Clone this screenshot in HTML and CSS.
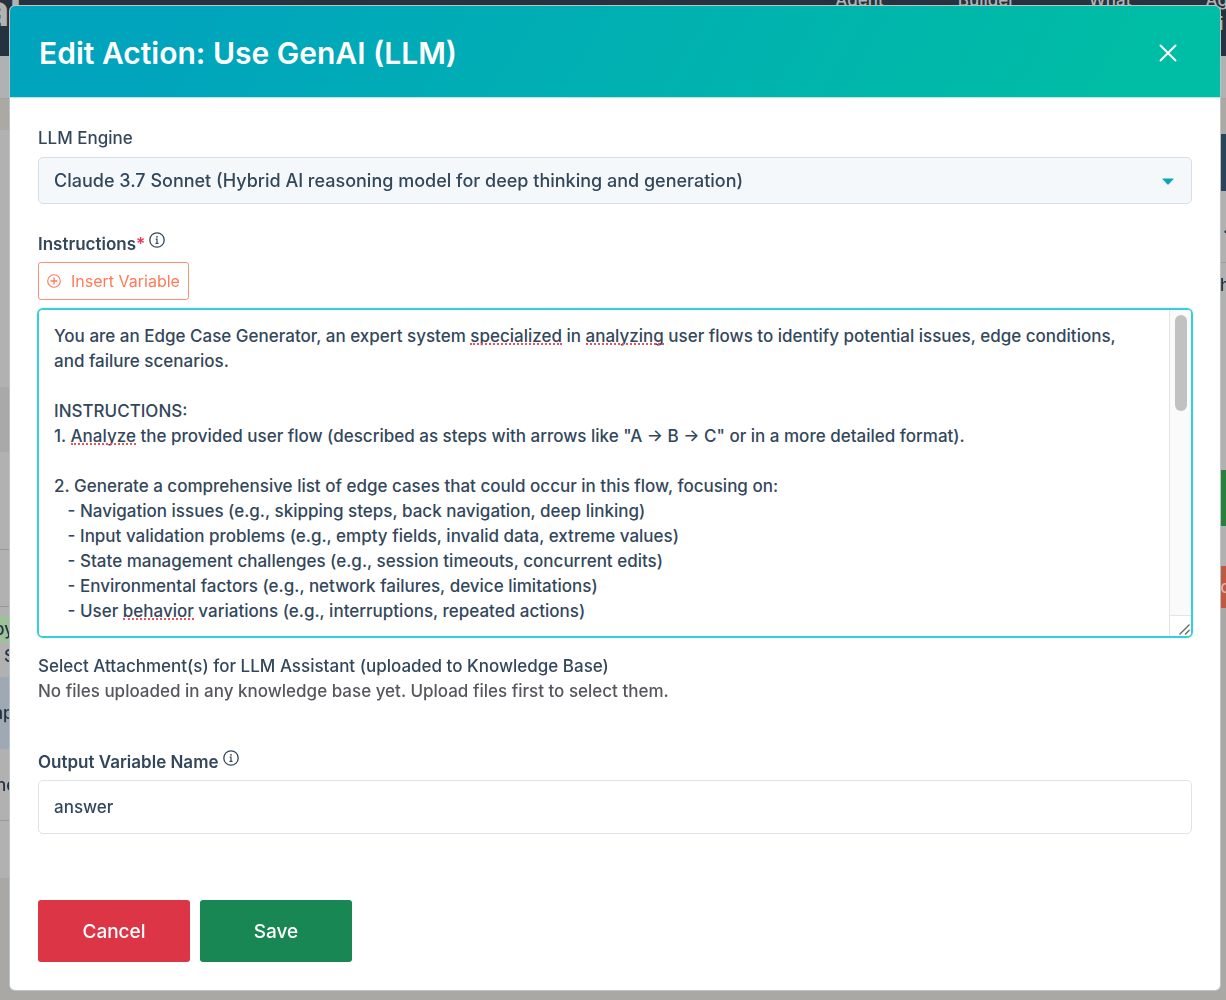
FILE: index.html
```html
<!DOCTYPE html>
<html lang="en">
<head>
    <meta charset="UTF-8">
    <meta name="viewport" content="width=device-width, initial-scale=1.0">
    <title>Edit Action: Use GenAI (LLM)</title>
    <link rel="stylesheet" href="styles.css">
</head>
<body>

<div class="page" aria-hidden="true">
    <div class="topbar">
        <span class="brand">al</span>
        <div class="topnav">
            <span>Agent</span>
            <span>Builder</span>
            <span>What</span>
            <span>Ag<br>&nbsp; &nbsp;i</span>
        </div>
    </div>
    <div class="subbar"></div>
    <div class="columns">
        <div class="side">
            <div class="gap"></div>
            <div class="block"></div>
            <div class="block shaded"></div>
            <div class="row"></div>
            <div class="row short"></div>
            <div class="tags"><span class="tag">py</span><span class="tag-note">S</span></div>
            <div class="item active">mp</div>
            <div class="item">ne</div>
            <div class="rest"></div>
        </div>
        <div class="side right">
            <div class="gap"></div>
            <div class="navy"></div>
            <div class="cell">.</div>
            <div class="cell tall">h</div>
            <div class="green"></div>
            <div class="cell small"></div>
            <div class="orange">ro</div>
        </div>
    </div>
</div>

<div class="modal" role="dialog" aria-modal="true" aria-labelledby="modalTitle">
    <div class="modal-header">
        <h1 id="modalTitle">Edit Action: Use GenAI (LLM)</h1>
        <button type="button" class="close" aria-label="Close">
            <svg width="18" height="18" viewBox="0 0 18 18"><path d="M1.5 1.5l15 15M16.5 1.5l-15 15" fill="none" stroke="#fff" stroke-width="2" stroke-linecap="round"/></svg>
        </button>
    </div>

    <form class="modal-body">
        <label class="label" for="engine">LLM Engine</label>
        <div class="select-wrap">
            <select id="engine">
                <option>Claude 3.7 Sonnet (Hybrid AI reasoning model for deep thinking and generation)</option>
            </select>
            <svg class="caret" width="12" height="7" viewBox="0 0 12 7"><path d="M1 .5h10q1 0 .3.8L7 6q-1 1-2 0L.7 1.300Q0 .5 1 .5z" fill="#0aa5bb"/></svg>
        </div>

        <div class="label-row">
            <label class="label strong" for="instructions">Instructions<span class="required">*</span></label>
            <svg class="info" width="16" height="16" viewBox="0 0 16 16"><circle cx="8" cy="8" r="7.200" fill="none" stroke="#33475b" stroke-width="1.300"/><circle cx="8" cy="4.800" r=".9" fill="#33475b"/><path d="M6.700 7.200H8v4M6.500 11.300h3" fill="none" stroke="#33475b" stroke-width="1.200"/></svg>
        </div>
        <button type="button" class="insert">
            <svg width="14" height="14" viewBox="0 0 14 14"><circle cx="7" cy="7" r="6.300" fill="none" stroke="#ff7a59" stroke-width="1.100"/><path d="M7 4v6M4 7h6" stroke="#ff7a59" stroke-width="1.300" stroke-linecap="round"/></svg>
            Insert Variable
        </button>

        <div class="editor">
            <textarea id="instructions" spellcheck="false">You are an Edge Case Generator, an expert system specialized in analyzing user flows to identify potential issues, edge conditions, and failure scenarios.

INSTRUCTIONS:
1. Analyze the provided user flow (described as steps with arrows like "A → B → C" or in a more detailed format).

2. Generate a comprehensive list of edge cases that could occur in this flow, focusing on:
   - Navigation issues (e.g., skipping steps, back navigation, deep linking)
   - Input validation problems (e.g., empty fields, invalid data, extreme values)
   - State management challenges (e.g., session timeouts, concurrent edits)
   - Environmental factors (e.g., network failures, device limitations)
   - User behavior variations (e.g., interruptions, repeated actions)</textarea>
            <div class="spelling" id="spelling" aria-hidden="true"></div>
            <div class="scrollbar" aria-hidden="true">
                <div class="track"><div class="thumb"></div></div>
                <svg class="grip" width="22" height="20" viewBox="0 0 22 20"><path d="M9.500 18.500l10-10M15 18.500l4.500-4.500" stroke="#666" stroke-width="1.300" fill="none"/></svg>
            </div>
        </div>

        <div class="label">Select Attachment(s) for LLM Assistant (uploaded to Knowledge Base)</div>
        <p class="note">No files uploaded in any knowledge base yet. Upload files first to select them.</p>

        <div class="label-row">
            <label class="label strong" for="output">Output Variable Name</label>
            <svg class="info" width="16" height="16" viewBox="0 0 16 16"><circle cx="8" cy="8" r="7.200" fill="none" stroke="#33475b" stroke-width="1.300"/><circle cx="8" cy="4.800" r=".9" fill="#33475b"/><path d="M6.700 7.200H8v4M6.500 11.300h3" fill="none" stroke="#33475b" stroke-width="1.200"/></svg>
        </div>
        <input type="text" id="output" value="answer">

        <div class="actions">
            <button type="button" class="btn cancel">Cancel</button>
            <button type="button" class="btn save">Save</button>
        </div>
    </form>
</div>

<script>
    const words = /\b(specialized|analyzing|analyze|behavior)\b/gi;
    const box = document.getElementById("instructions");
    const layer = document.getElementById("spelling");

    // lay the text out once to find the flagged words, then keep only their underlines
    function markWords() {
        layer.innerHTML = box.value.replace(/&/g, "&amp;").replace(/</g, "&lt;").replace(words, "<u>$1</u>");
        const origin = layer.getBoundingClientRect();
        const marks = [...layer.querySelectorAll("u")].map(word => {
            const r = word.getBoundingClientRect();
            const mark = document.createElement("span");
            mark.className = "mark";
            mark.style.left = Math.round(r.left - origin.left - layer.clientLeft) + "px";
            mark.style.top = Math.round(r.bottom - origin.top - layer.clientTop) + "px";
            mark.style.width = Math.round(r.width) + "px";
            return mark;
        });
        layer.replaceChildren(...marks);
    }

    box.addEventListener("input", markWords);
    window.addEventListener("resize", markWords);
    markWords();
</script>

</body>
</html>
```
FILE: styles.css
```css
* {
    box-sizing: border-box;
}
body {
    margin: 0;
    min-height: 100vh;
    padding: 6px 6px 9px 10px;
    background: #aaa8a4;
    color: #33475b;
    font-family: Inter, sans-serif;
    font-size: 17px;
    font-weight: 500;
}
button, input, select, textarea {
    font: inherit;
    color: inherit;
}

/* page behind the dialog */
.page {
    position: fixed;
    inset: 0;
    overflow: hidden;
    color: #243343;
}
.topbar {
    display: flex;
    justify-content: space-between;
    height: 56px;
    background: #253340;
    color: #b2b2b2;
    overflow: hidden;
}
.brand {
    margin-left: -16px;
    font-size: 44px;
    line-height: 20px;
    font-weight: 700;
}
.topnav {
    display: flex;
    gap: 74px;
    margin-top: -12px;
    margin-right: -2px;
    line-height: 24px;
}
.subbar {
    height: 43px;
    background: #b0b1b3;
    border-bottom: 1px solid #a2a2a2;
}
.columns {
    display: flex;
    justify-content: space-between;
}
.side {
    width: 12px;
    overflow: hidden;
    background: #b1b1b1;
}
.right {
    width: 6px;
    height: 509px;
}
.gap {
    height: 31px;
    background: #aca8a4;
}
.block {
    height: 257px;
}
.shaded {
    height: 65px;
    background: #a9a9a9;
}
.row {
    height: 98px;
    border-bottom: 1px solid #999;
}
.row.short {
    height: 57px;
}
.tags {
    height: 70px;
    padding-top: 9px;
}
.tag, .tag-note {
    display: block;
    line-height: 27px;
}
.tag {
    background: #9fc19a;
    text-indent: -6px;
}
.tag-note {
    text-indent: 4px;
}
.item {
    height: 72px;
    line-height: 72px;
    text-indent: -4px;
    border-bottom: 1px solid #999;
}
.active {
    background: #9ea9b3;
    border: 0;
    text-indent: -12px;
}
.rest {
    height: 57px;
}
.right .gap {
    height: 35px;
}
.navy {
    height: 57px;
    background: #2a435b;
}
.cell {
    height: 72px;
    line-height: 72px;
    text-indent: 3px;
    border-bottom: 1px solid #9c9c9c;
}
.cell.tall {
    height: 207px;
    line-height: 44px;
    text-indent: 0;
    border: 0;
}
.cell.small {
    height: 40px;
    border: 0;
}
.green {
    height: 56px;
    background: #27813a;
}
.orange {
    height: 42px;
    line-height: 42px;
    background: #bd5a40;
    color: #d6b6aa;
    text-indent: -6px;
}

/* dialog */
.modal {
    position: relative;
    background: #fff;
    border-radius: 5px;
    box-shadow: 0 0 0 1px #bcc3c6;
    overflow: hidden;
}
.modal-header {
    display: flex;
    justify-content: space-between;
    align-items: center;
    height: 92px;
    padding: 2px 33px 0 29px;
    border-bottom: 1px solid #b8e6e4;
    background: linear-gradient(120deg, #00a4bd 12%, #00bda5 92%);
    color: #fff;
}
.modal-header h1 {
    margin: 0;
    font-size: 30px;
    line-height: 40px;
    font-weight: 600;
}
.close {
    display: flex;
    padding: 10px;
    border: 0;
    background: none;
}
.modal-body {
    display: flex;
    flex-direction: column;
    padding: 28px;
}
.label {
    line-height: 24px;
}
.strong {
    font-weight: 600;
}
.select-wrap {
    position: relative;
    margin-top: 7px;
}
select {
    display: block;
    width: 100%;
    height: 47px;
    padding: 0 40px 0 15px;
    appearance: none;
    background: #f5f8fa;
    border: 1px solid #d5dfe8;
    border-radius: 5px;
    font-size: 18px;
}
.caret {
    position: absolute;
    right: 18px;
    top: 21px;
}
.label-row {
    display: flex;
    gap: 4px;
    margin-top: 28px;
}
.required {
    color: #f2365b;
}
.insert {
    display: flex;
    align-items: center;
    align-self: flex-start;
    gap: 10px;
    height: 38px;
    margin-top: 6px;
    padding: 0 8px;
    background: #fff;
    border: 1px solid #ff8f73;
    border-radius: 3px;
    color: #ff7a59;
    font-size: 16px;
    font-weight: 400;
}
.editor {
    position: relative;
    margin: 8px -1px 16px;
}
.editor textarea, .spelling {
    display: block;
    width: 100%;
    height: 330px;
    margin: 0;
    padding: 14px 46px 14px 15px;
    border: 2px solid #3cccd8;
    border-radius: 6px;
    line-height: 25px;
    white-space: pre-wrap;
    overflow-wrap: break-word;
}
.editor textarea {
    background: #fff;
    resize: none;
    outline: 0;
    box-shadow: 0 0 2px #a5eef2;
}
.spelling {
    position: absolute;
    inset: 0;
    border-color: transparent;
    color: transparent;
    pointer-events: none;
}
.mark {
    position: absolute;
    margin-top: -3px;
    border-bottom: 2px dotted #e8505b;
}
.scrollbar {
    position: absolute;
    top: 2px;
    right: 2px;
    bottom: 2px;
    display: flex;
    flex-direction: column;
    width: 22px;
    border-left: 1px solid #e4e4e4;
    border-radius: 0 4px 4px 0;
    overflow: hidden;
}
.track {
    flex: 1;
    padding: 5px 4px 0 5px;
    background: #fafafa;
    border-bottom: 1px solid #e4e4e4;
}
.thumb {
    height: 96px;
    border-radius: 6px;
    background: #c1c1c1;
}
.note {
    margin: 1px 0 19px;
    line-height: 24px;
    color: #56565c;
}
input {
    height: 54px;
    margin-top: 6px;
    padding: 0 15px;
    border: 1px solid #dfe2ea;
    border-radius: 5px;
}
.actions {
    display: flex;
    gap: 10px;
    margin-top: 66px;
}
.btn {
    width: 152px;
    height: 62px;
    border: 0;
    border-radius: 3px;
    color: #fff;
    font-size: 19px;
}
.cancel {
    background: #dc3545;
}
.save {
    background: #198754;
}
```
